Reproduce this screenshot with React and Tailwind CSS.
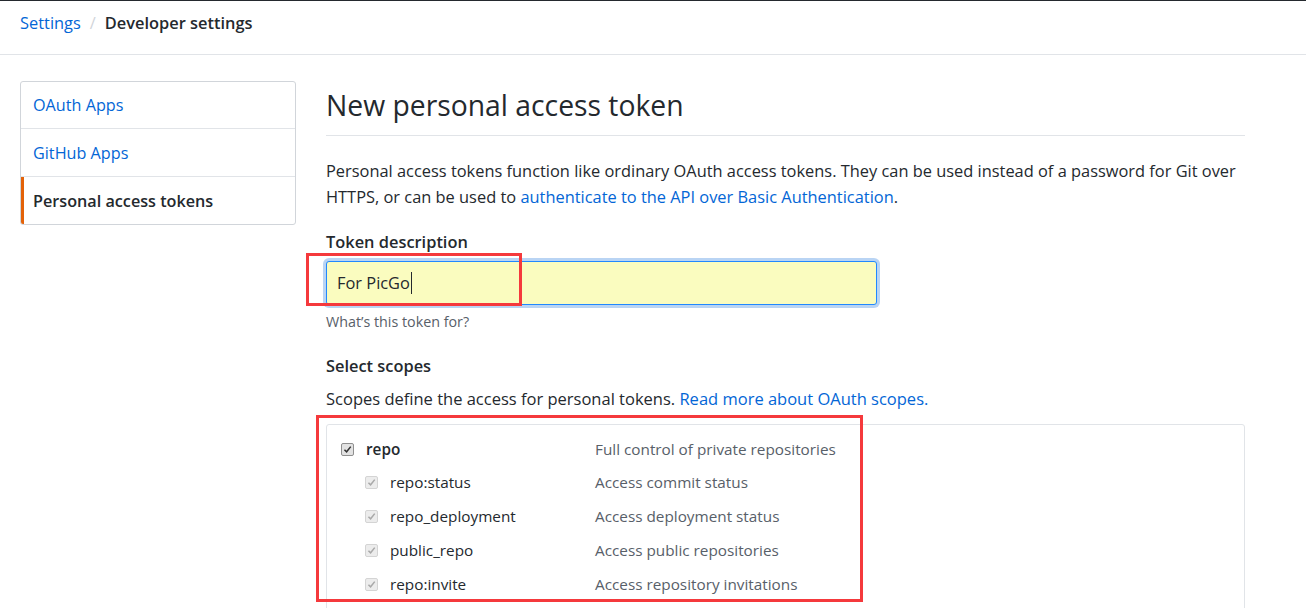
const SCOPES = [
  { key: 'repo:status', desc: 'Access commit status' },
  { key: 'repo_deployment', desc: 'Access deployment status' },
  { key: 'public_repo', desc: 'Access public repositories' },
  { key: 'repo:invite', desc: 'Access repository invitations' },
]

function Check({ disabled }) {
  return (
    <span
      className={
        'flex h-[13px] w-[13px] items-center justify-center rounded-[2px] border ' +
        (disabled ? 'border-[#d4d4d4] bg-[#ececec]' : 'border-[#8f8f8f] bg-[#e2e2e2]')
      }
    >
      <svg viewBox="0 0 10 10" className="h-[9px] w-[9px]">
        <path
          d="M1.6 5.2 L4 7.6 L8.6 1.8"
          fill="none"
          stroke={disabled ? '#a9a9a9' : '#333'}
          strokeWidth="1.7"
        />
      </svg>
    </span>
  )
}

export default function App() {
  return (
    <div
      className="min-h-screen border-t border-[#24292e] bg-white text-[#24292e]"
      style={{ fontFamily: '"Open Sans", "Noto Sans", sans-serif' }}
    >
      {/* Breadcrumb */}
      <div className="flex h-[54px] items-start border-b border-[#e1e4e8] px-5 pt-[9px] text-[16.4px] leading-[26px]">
        <a className="text-[#0366d6]">Settings</a>
        <span className="mx-[9px] text-[#d1d5da]">/</span>
        <span className="font-semibold">Developer settings</span>
      </div>

      <div className="flex gap-[30px] px-5 pt-[26px]">
        {/* Sidebar */}
        <nav className="h-[144px] w-[276px] shrink-0 overflow-hidden rounded-[3px] border border-[#d1d5da] text-[16.2px]">
          <a className="flex h-[47px] items-center border-b border-[#e1e4e8] px-3 pt-[1px] text-[#0366d6]">OAuth Apps</a>
          <a className="flex h-[48px] items-center border-b border-[#e1e4e8] px-3 pt-[1px] text-[#0366d6]">GitHub Apps</a>
          <a className="flex h-[47px] items-center border-l-[3px] border-[#e36209] px-[9px] pt-[1px] font-semibold">
            Personal access tokens
          </a>
        </nav>

        {/* Main */}
        <main className="relative w-[919px] pt-[4px]">
          <h1 className="border-b border-[#e1e4e8] pb-[10px] text-[28.3px] font-normal leading-[40px]">
            New personal access token
          </h1>

          <p className="mt-[22px] text-[16.4px] leading-[26px]">
            Personal access tokens function like ordinary OAuth access tokens. They can be used instead of a password
            for Git over HTTPS, or can be used to{' '}
            <a className="text-[#0366d6]">authenticate to the API over Basic Authentication</a>.
          </p>

          <label className="mt-[20px] block text-[16.4px] font-semibold leading-[24px]">Token description</label>
          <div className="mt-[7px] flex h-[44px] w-[551px] items-center rounded-[3px] border border-[#2188ff] bg-[#fafcbf] px-[10px] shadow-[0_0_0_3px_rgba(3,102,214,0.28)]">
            <span className="text-[16.4px] leading-[24px]">For PicGo</span>
            <span className="ml-[1px] h-[22px] w-[1px] bg-[#24292e]" />
          </div>
          <p className="mt-[7px] text-[14.3px] leading-[20px] text-[#586069]">What’s this token for?</p>

          <h3 className="mt-[22px] text-[16.4px] font-semibold leading-[24px]">Select scopes</h3>
          <p className="mt-[9px] text-[16.5px] leading-[24px]">
            Scopes define the access for personal tokens.{' '}
            <a className="text-[#0366d6]">Read more about OAuth scopes.</a>
          </p>

          {/* Scopes table */}
          <div className="mt-[13px] flex flex-col gap-[9.75px] rounded-[3px] border border-[#e1e4e8] pb-[20px] pl-[14px] pt-[12px] text-[15.3px]">
            <div className="flex h-[24px] items-center">
              <div className="flex w-[254px] items-center gap-[12px]">
                <Check />
                <span className="font-semibold">repo</span>
              </div>
              <span className="text-[#586069]">Full control of private repositories</span>
            </div>
            {SCOPES.map((s) => (
              <div key={s.key} className="flex h-[24px] items-center">
                <div className="flex w-[254px] items-center gap-[12px] pl-[24px]">
                  <Check disabled />
                  <span>{s.key}</span>
                </div>
                <span className="text-[#586069]">{s.desc}</span>
              </div>
            ))}
          </div>

          {/* Annotation boxes */}
          <div className="pointer-events-none absolute left-[-20px] top-[172px] h-[53px] w-[216px] border-[3px] border-[#f5393c]" />
          <div className="pointer-events-none absolute left-[-10px] top-[334px] h-[187px] w-[547px] border-[3px] border-[#f5393c]" />
        </main>
      </div>
    </div>
  )
}
